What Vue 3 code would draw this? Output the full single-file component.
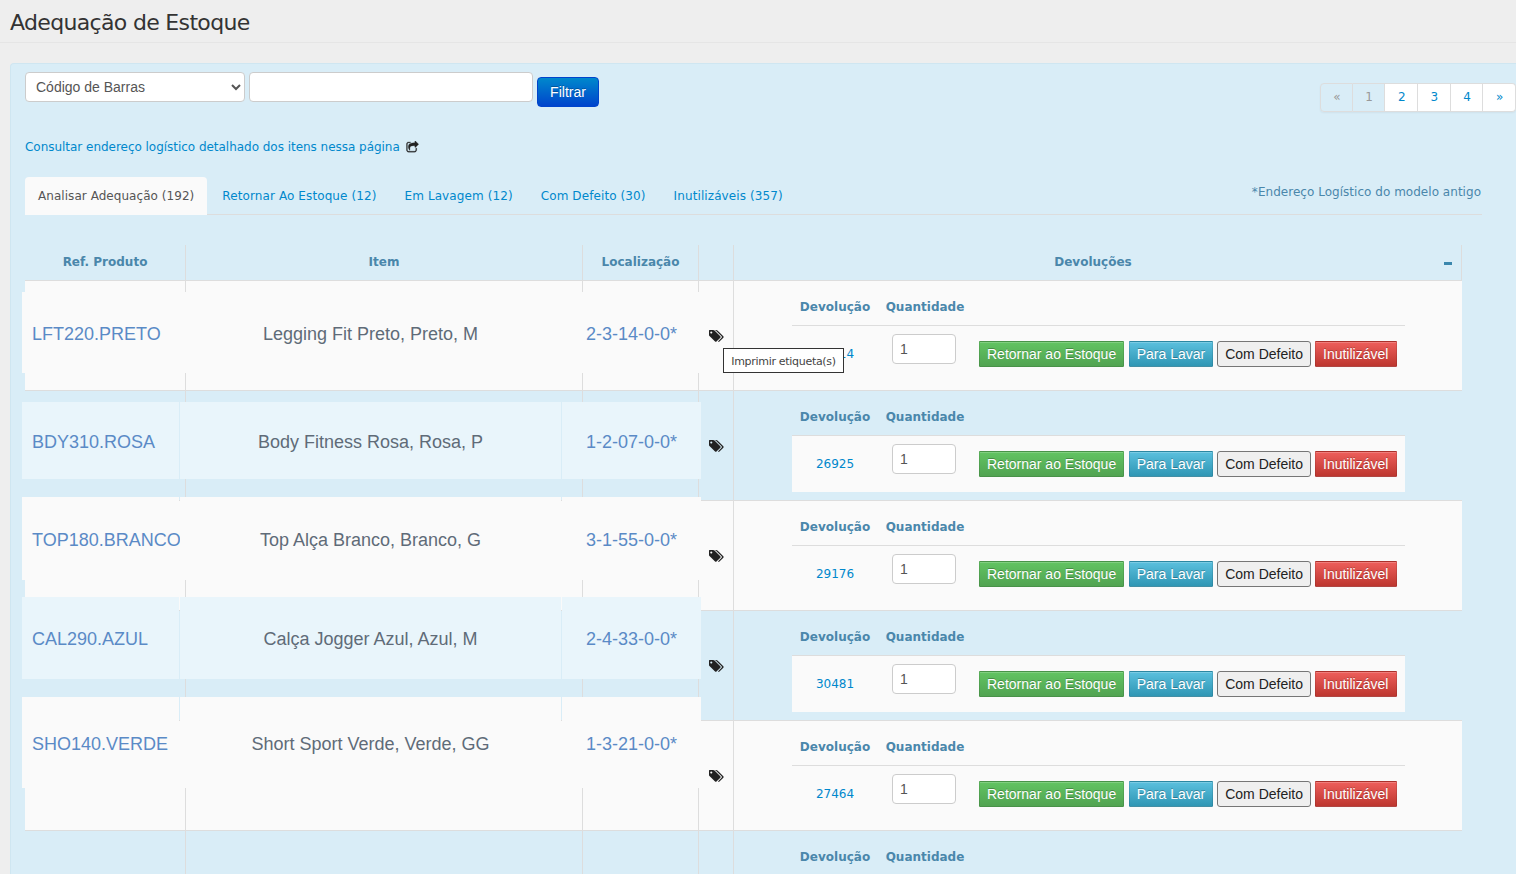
<script setup>
// linhas da tabela de adequação
const rows = [
  { ref: 'LFT220.PRETO', item: 'Legging Fit Preto, Preto, M', loc: '2-3-14-0-0*', dev: '28114', gap: 0, h: 81 },
  { ref: 'BDY310.ROSA', item: 'Body Fitness Rosa, Rosa, P', loc: '1-2-07-0-0*', dev: '26925', gap: 29, h: 77 },
  { ref: 'TOP180.BRANCO', item: 'Top Alça Branco, Branco, G', loc: '3-1-55-0-0*', dev: '29176', gap: 18, h: 83 },
  { ref: 'CAL290.AZUL', item: 'Calça Jogger Azul, Azul, M', loc: '2-4-33-0-0*', dev: '30481', gap: 17, h: 82 },
  { ref: 'SHO140.VERDE', item: 'Short Sport Verde, Verde, GG', loc: '1-3-21-0-0*', dev: '27464', gap: 18, h: 91 }
]
const lastRow = { dev: '31052' }
const allRows = [...rows, lastRow]
const tabs = ['Retornar Ao Estoque (12)', 'Em Lavagem (12)', 'Com Defeito (30)', 'Inutilizáveis (357)']
const pages = ['2', '3', '4', '»']
const tagsPath = 'M384 448q0-53-37.5-90.5t-90.5-37.5-90.5 37.5-37.5 90.5 37.5 90.5 90.5 37.5 90.5-37.5 37.5-90.5zm1067 576q0 53-37 90l-491 492q-39 37-91 37-53 0-90-37l-715-716q-38-37-64.5-101t-26.5-117v-416q0-52 38-90t90-38h416q53 0 117 26.5t102 64.5l715 714q37 39 37 91zm384 0q0 53-37 90l-491 492q-39 37-91 37-36 0-59-14t-53-45l470-470q37-37 37-90 0-52-37-91l-715-714q-38-38-102-64.5t-117-26.5h224q53 0 117 26.5t102 64.5l715 714q37 39 37 91z'
</script>

<template>
  <div class="page">
    <h1 class="title">Adequação de Estoque</h1>
    <section class="panel">
      <div class="top-row">
        <form class="filter" @submit.prevent>
          <select class="filter-select"><option>Código de Barras</option></select>
          <input class="filter-input" type="text" />
          <button class="btn-filter">Filtrar</button>
        </form>
        <nav class="pagination">
          <span class="off">«</span>
          <span class="off">1</span>
          <a v-for="p in pages" :key="p">{{ p }}</a>
        </nav>
      </div>

      <p class="consult">
        <a>Consultar endereço logístico detalhado dos itens nessa página</a>
        <svg class="share" viewBox="0 0 1792 1792"><path d="M1472 989v259q0 119-84.5 203.5t-203.5 84.5h-832q-119 0-203.5-84.5t-84.5-203.5v-832q0-119 84.5-203.5t203.5-84.5h255q13 0 22.5 9.5t9.5 22.5q0 27-26 32-77 26-133 60-10 4-16 4h-112q-66 0-113 47t-47 113v832q0 66 47 113t113 47h832q66 0 113-47t47-113v-214q0-19 18-29 28-13 54-37 16-16 35-8 21 9 21 29zm237-496l-384 384q-18 19-45 19-12 0-25-5-39-17-39-59v-192h-160q-323 0-438 131-119 137-74 473 3 23-20 34-8 2-12 2-16 0-26-13-10-14-21-31t-39.5-68.5-49.5-99.5-38.5-114-17.5-122q0-49 3.5-91t14-90 28-88 47-81.5 68.5-74 94.5-61.5 124.5-48.5 159.5-30.5 196.5-11h160v-192q0-42 39-59 13-5 25-5 26 0 45 19l384 384q19 19 19 45t-19 45z" /></svg>
      </p>

      <div class="tabs">
        <a class="tab active">Analisar Adequação (192)</a>
        <a v-for="t in tabs" :key="t" class="tab">{{ t }}</a>
        <span class="tabs-note">*Endereço Logístico do modelo antigo</span>
      </div>

      <div class="table">
        <div class="row head">
          <div class="col">Ref. Produto</div>
          <div class="col">Item</div>
          <div class="col">Localização</div>
          <div class="col"></div>
          <div class="col col-dev">Devoluções<span class="collapse"></span></div>
        </div>

        <div v-for="(r, i) in allRows" :key="r.dev" class="row body" :class="{ even: i % 2 === 1 }">
          <div class="col"></div>
          <div class="col"></div>
          <div class="col"></div>
          <div class="col col-icon">
            <svg class="tags" viewBox="0 0 1850 1792"><path :d="tagsPath" /></svg>
          </div>
          <div class="col col-nested">
            <div class="nested">
              <div class="nested-head">
                <span>Devolução</span>
                <span>Quantidade</span>
              </div>
              <div class="nested-body">
                <a class="dev-link">{{ r.dev }}</a>
                <span class="qty-cell"><input class="qty" type="text" value="1" /></span>
                <div class="actions">
                  <button class="btn green">Retornar ao Estoque</button>
                  <button class="btn blue">Para Lavar</button>
                  <button class="btn plain">Com Defeito</button>
                  <button class="btn red">Inutilizável</button>
                </div>
              </div>
            </div>
          </div>
        </div>

        <!-- colunas fixas por cima da tabela -->
        <div class="frozen">
          <div
            v-for="(r, i) in rows"
            :key="r.ref"
            class="frozen-row"
            :class="{ even: i % 2 === 1 }"
            :style="{ marginTop: r.gap + 'px', height: r.h + 'px' }"
          >
            <div class="cell cell-ref"><a>{{ r.ref }}</a></div>
            <div class="cell cell-item">{{ r.item }}</div>
            <div class="cell cell-loc"><a>{{ r.loc }}</a></div>
          </div>
        </div>

        <div class="tooltip">Imprimir etiqueta(s)</div>
      </div>
    </section>
  </div>
</template>

<style>
html, body { margin: 0; background: #eee; overflow: hidden; }
</style>

<style scoped>
.page {
  height: 874px;
  overflow: hidden;
  background: #eee;
  font-family: "DejaVu Sans", Verdana, sans-serif;
  font-size: 12px;
}
.title {
  margin: 0 0 20px;
  height: 43px;
  padding: 10px 0 0 10px;
  box-sizing: border-box;
  border-bottom: 1px solid #e5e5e5;
  font-size: 22px;
  letter-spacing: -.67px;
  line-height: 26px;
  font-weight: 400;
  color: #333;
}
.panel {
  margin-left: 10px;
  padding: 8px 0 0 14px;
  background: #d9edf7;
  border: 1px solid #cfe6f1;
  border-right: 0;
  border-radius: 4px 0 0 0;
  height: 900px;
}
.top-row { display: flex; justify-content: space-between; height: 40px; }
.filter { display: flex; align-items: flex-start; gap: 4px; }
.filter-select, .filter-input {
  box-sizing: border-box;
  height: 30px;
  background: #fff;
  border: 1px solid #ccc;
  border-radius: 4px;
  font: 14px "Liberation Sans", Arial, sans-serif;
  color: #555;
}
.filter-select { width: 220px; padding-left: 6px; }
.filter-input { width: 284px; }
.btn-filter {
  margin-top: 5px;
  width: 62px;
  height: 30px;
  padding: 0;
  border: 1px solid #04c;
  border-radius: 4px;
  background: linear-gradient(#08c, #04c);
  font: 14px "Liberation Sans", Arial, sans-serif;
  color: #fff;
  text-shadow: 0 -1px 0 rgba(0, 0, 0, .25);
}
.pagination {
  display: flex;
  margin-top: 11px;
  height: 29px;
  border-radius: 4px;
  box-shadow: 0 1px 2px rgba(0, 0, 0, .05);
}
.pagination > * {
  box-sizing: border-box;
  width: 32.67px;
  padding-left: 1px;
  border: 1px solid #ddd;
  border-left-width: 0;
  line-height: 27px;
  text-align: center;
  background: #fff;
  color: #08c;
}
.pagination > .off { background: #d9edf7; color: #999; }
.pagination > :first-child { border-left-width: 1px; border-radius: 4px 0 0 4px; }
.pagination > :last-child { border-radius: 0 4px 4px 0; }
.consult {
  margin: 27px 0 0;
  height: 16px;
  line-height: 16px;
  display: flex;
  align-items: center;
  letter-spacing: -.03px;
  color: #08c;
}
.share { width: 13px; height: 13px; margin-left: 6px; fill: #222; stroke: #222; stroke-width: 35; }
.tabs {
  display: flex;
  position: relative;
  margin: 22px 34px 0 0;
  height: 38px;
  border-bottom: 1px solid #ddd;
  box-sizing: border-box;
}
.tab { padding: 0 14px; line-height: 39px; letter-spacing: .1px; color: #08c; }
.tab.active {
  padding: 0 13px;
  margin-right: 1px;
  background: #fafafa;
  height: 38px;
  border-radius: 4px 4px 0 0;
  letter-spacing: .05px;
  color: #555;
}
.tabs-note { margin: 0 1px 0 auto; line-height: 31px; letter-spacing: .03px; color: #4a87ab; }
.table { position: relative; width: 1437px; margin-top: 30px; }
.row { display: grid; grid-template-columns: 161px 397px 116px 35px 728px; }
.col { border-right: 1px solid #ddd; box-sizing: border-box; }
.head { height: 36px; border-bottom: 1px solid #ddd; box-sizing: border-box; }
.head .col {
  line-height: 34px;
  text-align: center;
  font-weight: 700;
  color: #4a87ab;
}
.head .col-dev { position: relative; padding-right: 9px; }
.collapse {
  position: absolute;
  right: 9px;
  top: 17px;
  width: 8px;
  height: 3px;
  background: #3a87ad;
}
.body { height: 110px; background: #fafafa; border-bottom: 1px solid #ddd; box-sizing: border-box; }
.body.even { background: #d9edf7; }
.col-icon { display: flex; align-items: center; justify-content: center; }
.tags { width: 15px; height: 14px; fill: #222; margin-top: 1px; }
.col-nested { border-right: 0; padding-left: 58px; }
.nested { width: 613px; }
.nested-head {
  display: grid;
  grid-template-columns: 86px 94px;
  height: 44px;
  border-bottom: 1px solid #ddd;
  line-height: 53px;
  text-align: center;
  font-weight: 700;
  color: #4a87ab;
}
.nested-body {
  display: grid;
  grid-template-columns: 86px 94px 1fr;
  align-items: center;
  height: 56px;
  background: #fafafa;
}
.dev-link { text-align: center; color: #08c; }
.qty-cell { display: flex; justify-content: center; margin: -10px 0 0 -2px; }
.qty {
  box-sizing: border-box;
  width: 64px;
  height: 30px;
  padding: 0 7px;
  background: #fff;
  border: 1px solid #ccc;
  border-radius: 4px;
  font: 14px "Liberation Sans", Arial, sans-serif;
  color: #555;
}
.actions { display: flex; gap: 4px; padding-left: 7px; margin-top: -1px; }
.btn {
  box-sizing: border-box;
  height: 26px;
  padding: 0 7px;
  border: 1px solid;
  border-color: rgba(0, 0, 0, .1) rgba(0, 0, 0, .1) rgba(0, 0, 0, .25);
  border-radius: 1px;
  box-shadow: inset 0 1px 0 rgba(255, 255, 255, .2);
  font: 14px "Liberation Sans", Arial, sans-serif;
  color: #fff;
  text-shadow: 0 -1px 0 rgba(0, 0, 0, .25);
  white-space: nowrap;
}
.btn.green { margin-right: 1px; background: linear-gradient(#62c462, #51a351); }
.btn.blue { padding: 0 6.5px; background: linear-gradient(#5bc0de, #2f96b4); }
.btn.plain { padding: 0 6.5px 0 7.5px; background: #efefef; border-color: #767676; border-radius: 3px; box-shadow: none; color: #222; text-shadow: none; }
.btn.red { padding: 0 7.5px; background: linear-gradient(#ee5f5b, #bd362f); }
.frozen {
  position: absolute;
  left: -3px;
  top: 47px;
  width: 679px;
  display: flex;
  flex-direction: column;
  z-index: 1;
}
.frozen-row {
  display: grid;
  grid-template-columns: 157px 381px 139px;
  column-gap: 1px;
  font: 18px "Liberation Sans", Arial, sans-serif;
  color: #5f6b78;
}
.cell {
  display: flex;
  align-items: center;
  justify-content: center;
  padding-top: 3px;
  box-sizing: border-box;
  background: #fafafa;
  white-space: nowrap;
}
.frozen-row.even .cell { background: #e9f5fb; }
.cell a { color: #5a8ac6; }
.cell-ref { justify-content: flex-start; padding-left: 10px; }
.tooltip {
  position: absolute;
  left: 698px;
  top: 103px;
  z-index: 2;
  box-sizing: border-box;
  width: 121px;
  height: 25px;
  border: 1px solid #333;
  background: #fff;
  line-height: 25px;
  text-align: center;
  font-size: 11px;
  letter-spacing: -.3px;
  color: #444;
}
</style>
